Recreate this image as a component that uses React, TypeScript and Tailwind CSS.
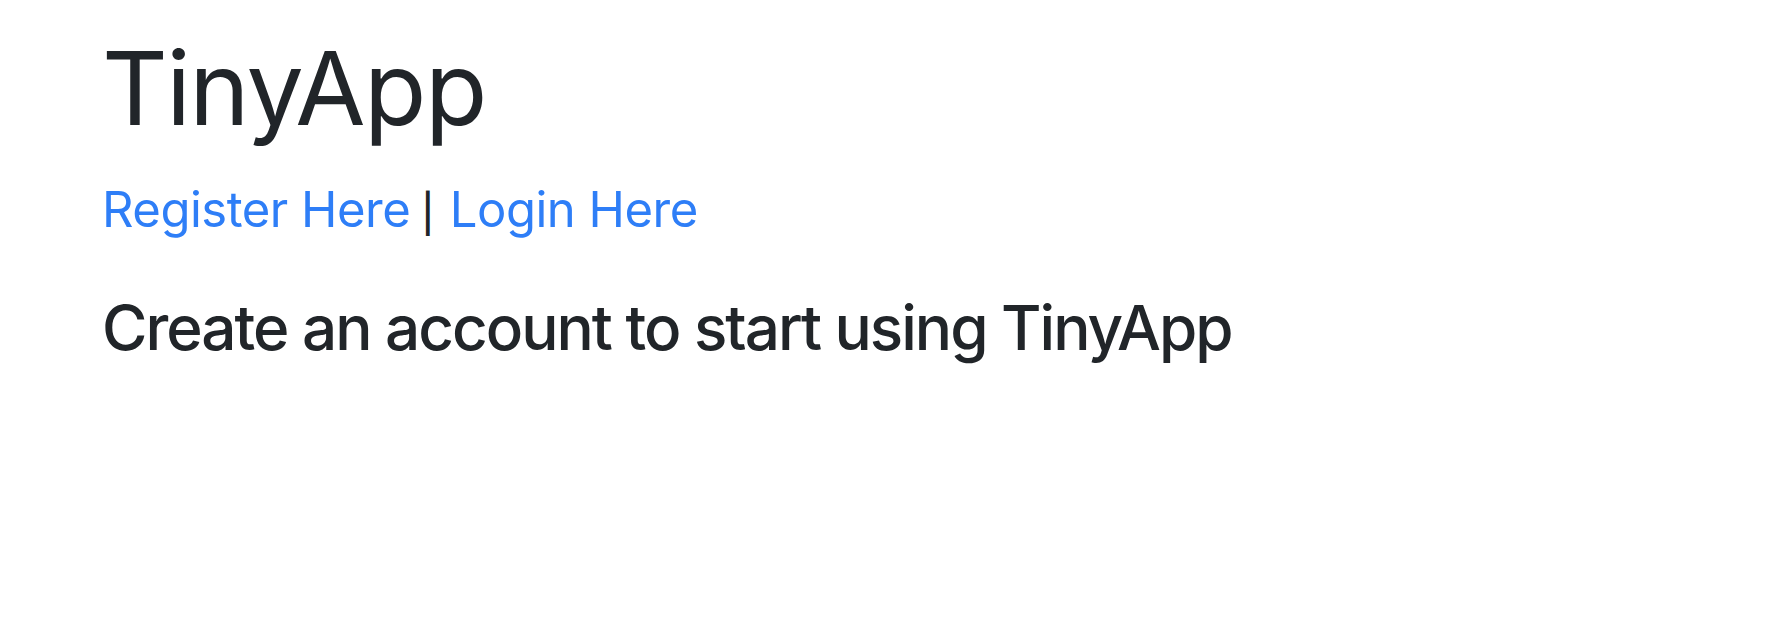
import React from "react";

export default function App() {
  return (
    <div className="min-h-[620px] w-full bg-white" style={{ fontFamily: "Inter, 'Noto Sans', sans-serif" }}>
      <div className="flex flex-col items-start pl-[102px] pt-[37px]">
        <h1 className="text-[102px] leading-none font-normal text-[#212529] tracking-[-1.6px]">TinyApp</h1>
        <div className="mt-[46px] flex items-baseline text-[49px] leading-none text-[#212529] tracking-[-0.5px]">
          <a href="#" className="text-[#2e7ef7]">Register Here</a>
          <span className="pl-[11px] pr-[16px] text-[38px] font-medium">|</span>
          <a href="#" className="text-[#2e7ef7]">Login Here</a>
        </div>
        <h3 className="mt-[63px] text-[62px] leading-none font-medium text-[#212529] tracking-[-2px]">Create an account to start using TinyApp</h3>
      </div>
    </div>
  );
}
